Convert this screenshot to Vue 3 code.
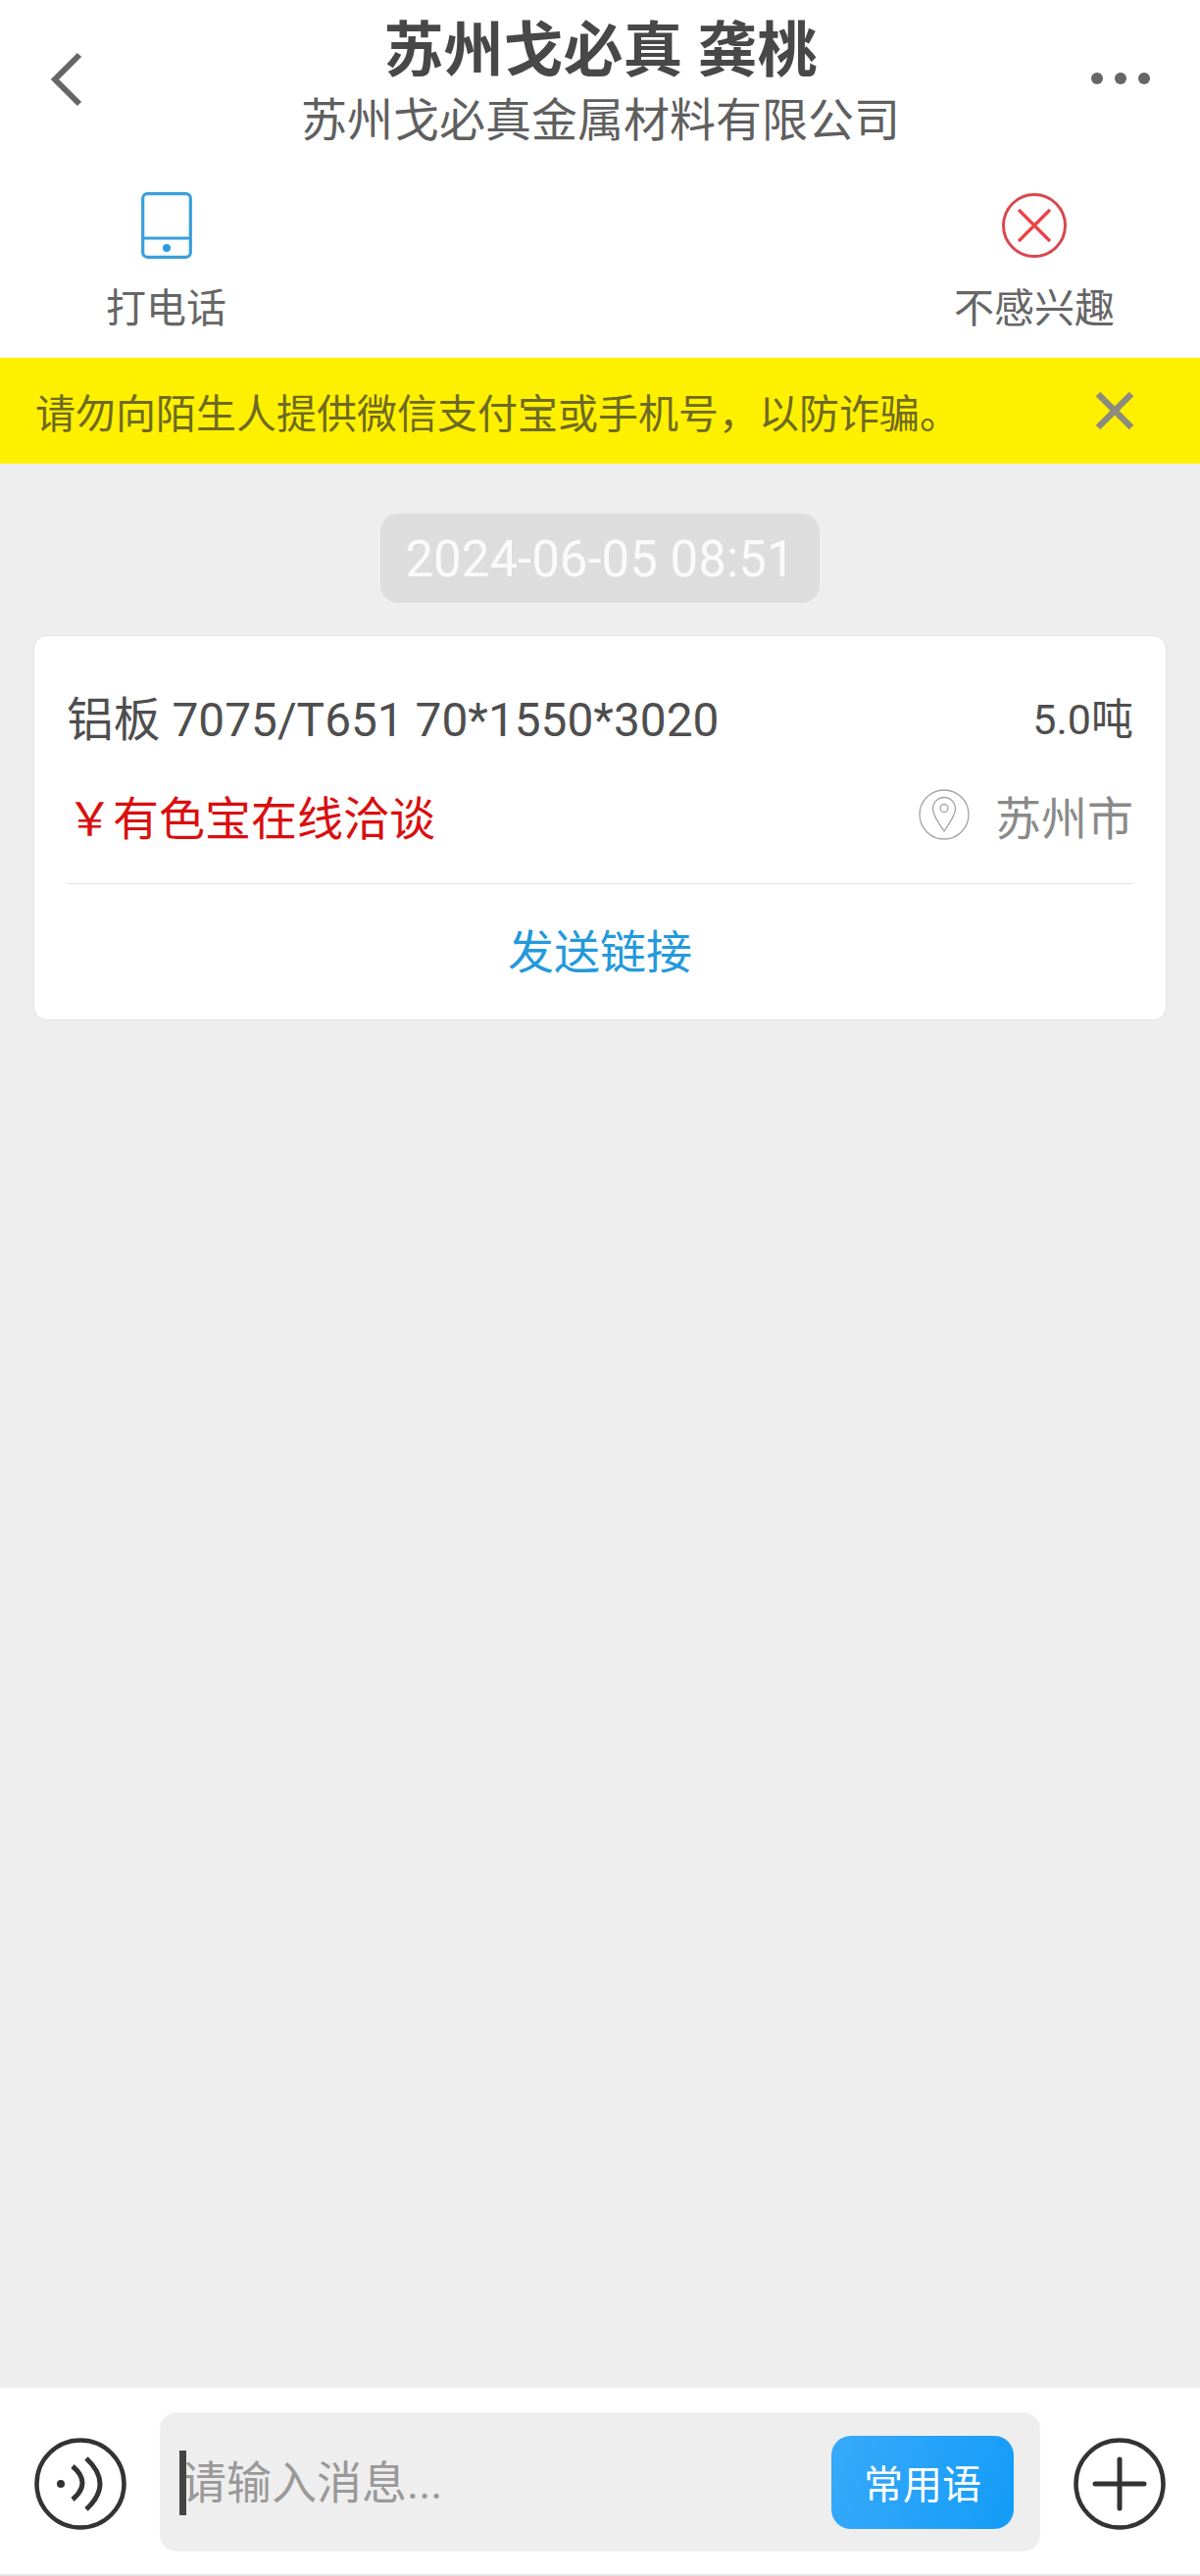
<template>
  <div class="page">
    <!-- HEADER -->
    <header class="topbar">
      <svg class="back" viewBox="0 0 32 56" width="32" height="56">
        <path d="M29 3 L4 28 L29 53" fill="none" stroke="#666" stroke-width="6" />
      </svg>
      <div class="titles">
        <h1>苏州戈必真 龚桃</h1>
        <p>苏州戈必真金属材料有限公司</p>
      </div>
      <div class="dots"><i></i><i></i><i></i></div>
    </header>

    <!-- ACTIONS -->
    <div class="actions">
      <div class="action">
        <svg viewBox="0 0 52 68" width="52" height="68">
          <rect x="1.7" y="1.7" width="48.6" height="64.6" rx="4.5" fill="none" stroke="#3a9fdc" stroke-width="3.2" />
          <path d="M2 47 H50" stroke="#3a9fdc" stroke-width="3.2" />
          <circle cx="26" cy="57" r="4" fill="#2d9be0" />
        </svg>
        <span>打电话</span>
      </div>
      <div class="action">
        <svg viewBox="0 0 68 68" width="68" height="68">
          <circle cx="34" cy="34" r="31.5" fill="none" stroke="#d9474f" stroke-width="3" />
          <path d="M18 18 L50 50 M50 18 L18 50" stroke="#ee4045" stroke-width="3.2" />
        </svg>
        <span>不感兴趣</span>
      </div>
    </div>

    <!-- NOTICE -->
    <div class="notice">
      <span>请勿向陌生人提供微信支付宝或手机号&#xFF0C;以防诈骗。</span>
      <svg viewBox="0 0 40 40" width="40" height="40">
        <path d="M3 3 L37 37 M37 3 L3 37" stroke="#8c8c7c" stroke-width="6.5" />
      </svg>
    </div>

    <!-- MESSAGES -->
    <main class="messages">
      <div class="time">2024-06-05 08:51</div>
      <section class="card">
        <div class="row first">
          <span class="product">铝板 7075/T651 70*1550*3020</span>
          <span class="qty">5.0吨</span>
        </div>
        <div class="row second">
          <span class="price">&#xFFE5;有色宝在线洽谈</span>
          <span class="place">
            <svg viewBox="0 0 52 52" width="52" height="52">
              <circle cx="26" cy="26" r="25" fill="none" stroke="#a3a3a3" stroke-width="1.3" />
              <path d="M26 43 C21 35 14.500 27.500 14.500 20 A11.500 11.500 0 0 1 37.500 20 C37.500 27.500 31 35 26 43 Z" fill="none" stroke="#a3a3a3" stroke-width="1.3" />
              <circle cx="26" cy="19.500" r="4" fill="none" stroke="#a3a3a3" stroke-width="1.3" />
            </svg>
            苏州市
          </span>
        </div>
        <div class="send">发送链接</div>
      </section>
    </main>

    <!-- INPUT BAR -->
    <footer class="inputbar">
      <svg class="round" viewBox="0 0 94 94" width="94" height="94">
        <circle cx="47" cy="47" r="44.500" fill="none" stroke="#333" stroke-width="4.500" />
        <circle cx="27" cy="47" r="4" fill="#333" />
        <path d="M39 29 Q59 46 39 63" fill="none" stroke="#333" stroke-width="5" />
        <path d="M53 21 Q81 47 53 73" fill="none" stroke="#333" stroke-width="5" />
      </svg>
      <div class="field">
        <i class="caret"></i>
        <span class="placeholder">请输入消息...</span>
        <button class="phrases">常用语</button>
      </div>
      <svg class="round" viewBox="0 0 94 94" width="94" height="94">
        <circle cx="47" cy="47" r="44.500" fill="none" stroke="#333" stroke-width="4.500" />
        <path d="M22 47 H72 M47 22 V72" stroke="#333" stroke-width="5" stroke-linecap="round" />
      </svg>
    </footer>
  </div>
</template>

<script setup>
</script>

<style>
html, body { margin: 0; background: #eee; }
</style>

<style scoped>
.page {
  width: 1224px;
  height: 2628px;
  display: flex;
  flex-direction: column;
  background: #eee;
  font-family: Roboto, "Noto Sans CJK SC", sans-serif;
  color: #555;
}

/* HEADER */
.topbar {
  height: 178px;
  background: #fff;
  display: grid;
  grid-template-columns: 1fr auto 1fr;
  align-items: start;
  box-sizing: border-box;
  padding: 0 51px 0 52px;
}
.back { margin-top: 53px; }
.titles { text-align: center; padding-top: 17px; }
.titles h1 {
  margin: 0;
  font-size: 61px;
  line-height: 70px;
  font-weight: 700;
  color: #484848;
}
.titles p {
  margin: 10px 0 0;
  font-size: 47px;
  line-height: 52px;
  color: #5f5f5f;
}
.dots { display: flex; gap: 12px; margin-top: 74px; justify-self: end; }
.dots i {
  width: 12px;
  height: 12px;
  border-radius: 50%;
  background: #666;
}

/* ACTIONS */
.actions {
  height: 187px;
  background: #fff;
  display: flex;
  justify-content: space-between;
  box-sizing: border-box;
  padding: 18px 87px 0 108px;
}
.action {
  display: flex;
  flex-direction: column;
  align-items: center;
  gap: 29px;
  font-size: 41px;
  line-height: 44px;
  color: #666;
}

/* NOTICE */
.notice {
  height: 108px;
  background: #fff000;
  display: flex;
  align-items: center;
  justify-content: space-between;
  box-sizing: border-box;
  padding: 0 67px 0 36px;
  font-size: 41px;
  color: #6e6a24;
}

/* MESSAGES */
.messages {
  flex: 1;
  display: flex;
  flex-direction: column;
  align-items: center;
  padding-top: 51px;
}
.time {
  width: 448px;
  height: 91px;
  border-radius: 18px;
  background: #ddd;
  color: #fafafa;
  font-size: 51px;
  line-height: 93px;
  text-align: center;
}
.card {
  width: 1156px;
  height: 393px;
  box-sizing: border-box;
  margin-top: 33px;
  padding: 0 33px;
  background: #fff;
  border: 1px solid #e3e3e3;
  border-radius: 14px;
}
.row {
  display: flex;
  justify-content: space-between;
  align-items: center;
}
.first { height: 84px; margin-top: 39px; }
.second { height: 118px; padding-bottom: 11px; border-bottom: 1px solid #e2e2e2; }
.product { font-size: 47.8px; color: #4e4e4e; }
.qty { font-size: 43px; color: #4e4e4e; }
.price { font-size: 47px; color: #d90f0f; }
.place {
  display: flex;
  align-items: center;
  gap: 26px;
  font-size: 47px;
  color: #8a8a8a;
}
.send {
  height: 139px;
  line-height: 139px;
  text-align: center;
  font-size: 47px;
  color: #2499dc;
}

/* INPUT BAR */
.inputbar {
  height: 192px;
  background: #fff;
  border-bottom: 2px solid #e4e4e4;
  box-sizing: border-box;
  display: flex;
  align-items: center;
  justify-content: space-between;
  padding: 2px 35px 0;
}
.round { margin-top: 4px; }
.field {
  position: relative;
  width: 898px;
  height: 142px;
  border-radius: 18px;
  background: #eee;
  display: flex;
  align-items: center;
  justify-content: space-between;
  box-sizing: border-box;
  padding: 0 27px 0 22px;
}
.caret {
  position: absolute;
  left: 20px;
  top: 39px;
  width: 7px;
  height: 66px;
  background: #444;
}
.placeholder { font-size: 46px; color: #999; padding-bottom: 6px; }
.phrases {
  width: 186px;
  height: 95px;
  border: none;
  border-radius: 20px;
  background: linear-gradient(110deg, #38aafa, #129cf7);
  color: #fff;
  font-family: inherit;
  font-size: 40px;
  padding: 0;
}
</style>
